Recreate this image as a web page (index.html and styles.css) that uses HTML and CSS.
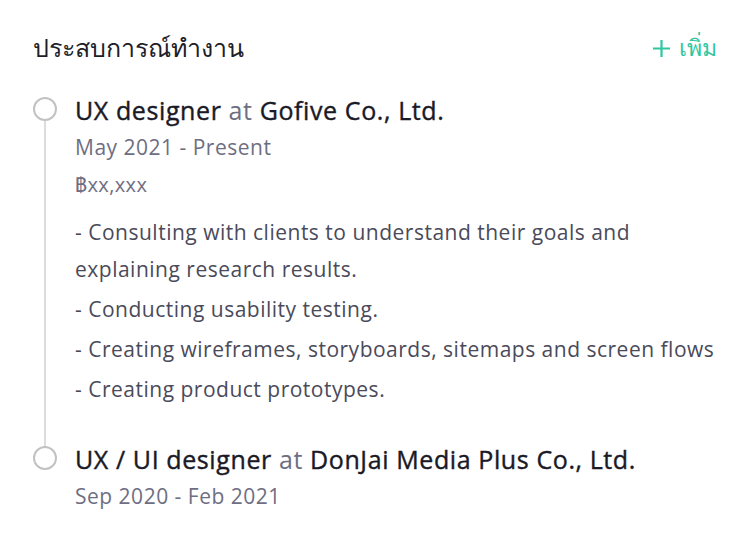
FILE: index.html
```html
<!DOCTYPE html>
<html lang="th">
<head>
<meta charset="utf-8">
<link rel="stylesheet" href="styles.css">
</head>
<body>
<section class="card">
  <header class="head">
    <h2 class="title">ประสบการณ์ทำงาน</h2>
    <a class="add"><svg class="plus" width="17" height="17" viewBox="0 0 17 17"><path d="M8.5 0v17M0 8.5h17" stroke="currentColor" stroke-width="2.2" fill="none"/></svg><span>เพิ่ม</span></a>
  </header>
  <ol class="timeline">
    <li class="item">
      <span class="dot"></span>
      <div class="body">
        <h3 class="role">UX designer <span class="at">at</span> Gofive Co., Ltd.</h3>
        <p class="date">May 2021 - Present</p>
        <p class="salary">฿xx,xxx</p>
        <div class="desc">
          <p>- Consulting with clients to understand their goals and explaining research results.</p>
          <p>- Conducting usability testing.</p>
          <p>- Creating wireframes, storyboards, sitemaps and screen flows</p>
          <p>- Creating product prototypes.</p>
        </div>
      </div>
    </li>
    <li class="item">
      <span class="dot"></span>
      <div class="body">
        <h3 class="role">UX / UI designer <span class="at">at</span> DonJai Media Plus Co., Ltd.</h3>
        <p class="date">Sep 2020 - Feb 2021</p>
      </div>
    </li>
  </ol>
</section>
</body>
</html>
```
FILE: styles.css
```css
* { box-sizing: border-box; }
html, body { margin: 0; padding: 0; background: #fff; }
body { font-family: "Open Sans", "Noto Sans", sans-serif; color: #1e1e2a; }
.card { padding: 28px 26px 0 33px; width: 750px; }
.head { display: flex; justify-content: space-between; align-items: center; height: 40px; }
.title { margin: 0; font-size: 25px; font-weight: 500; color: #1e1e2a; }
.add { color: #2ec7a0; font-size: 23px; display: flex; align-items: center; gap: 9px; margin-right: 7px; }
.plus { display: block; }
.timeline { list-style: none; margin: 26px 0 0; padding: 0; }
.item { position: relative; display: flex; gap: 18px; padding-bottom: 32px; }
.item:not(:last-child)::before { content: ""; position: absolute; left: 11px; top: 27px; bottom: -5px; width: 2px; background: #dcdcdc; }
.dot { flex: none; width: 24px; height: 24px; border: 2px solid #c2c2c2; border-radius: 50%; margin-top: 3px; background: #fff; }
.body { flex: 1; }
.role { margin: 0; font-size: 25px; font-weight: 500; line-height: 32px; letter-spacing: 0.6px; color: #1a1a26; -webkit-text-stroke: 0.4px #1a1a26; }
.at { color: #6e6e82; font-weight: 400; -webkit-text-stroke: 0; }
.date { margin: 6px 0 0; font-size: 21px; line-height: 30px; letter-spacing: 0.5px; color: #6e6e82; }
.salary { margin: 8px 0 0; font-size: 20px; line-height: 30px; letter-spacing: 0.4px; color: #6e6e82; }
.desc { margin-top: 14px; color: #4a4a5a; font-size: 21px; line-height: 37px; letter-spacing: 0.5px; }
.desc p { margin: 0 0 3px; }
```
